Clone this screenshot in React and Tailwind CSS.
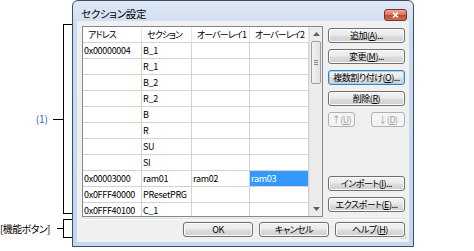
import React from 'react';

const rows = [
  ['0x00000004', 'B_1', '', ''],
  ['', 'R_1', '', ''],
  ['', 'B_2', '', ''],
  ['', 'R_2', '', ''],
  ['', 'B', '', ''],
  ['', 'R', '', ''],
  ['', 'SU', '', ''],
  ['', 'SI', '', ''],
  ['0x00003000', 'ram01', 'ram02', 'ram03'],
  ['0x0FFF40000', 'PResetPRG', '', ''],
  ['0x0FFF40100', 'C_1', '', ''],
];

const colW = ['w-[59px]', 'w-[50px]', 'w-[58px]', 'w-[59px]'];

const Btn = ({ children, className = 'w-[77px]', focus = false, disabled = false }) => {
  let look =
    'border-[#707070] bg-[linear-gradient(to_bottom,#f2f2f2,#ebebeb_48%,#dddddd_52%,#cfcfcf)] shadow-[inset_0_0_0_1px_#fbfbfb] text-black';
  if (focus)
    look =
      'border-[#3c7fb1] bg-[linear-gradient(to_bottom,#f2f2f2,#ebebeb_48%,#dddddd_52%,#cfcfcf)] shadow-[inset_0_0_0_1px_#9fd6f4] text-black';
  if (disabled) look = 'border-[#adb2b5] bg-[#f4f4f4] text-[#a0a0a0]';
  return (
    <div
      className={`${className} h-[15px] shrink-0 flex items-center justify-center rounded-[3px] border text-[9px] tracking-[-0.5px] leading-none whitespace-nowrap ${look}`}
    >
      {children}
    </div>
  );
};

const Tri = ({ down }) => (
  <svg width="7" height="4" viewBox="0 0 7 4">
    <path d={down ? 'M0 0h7L3.5 4z' : 'M0 4h7L3.5 0z'} fill="#606060" />
  </svg>
);

const Scrollbar = () => (
  <div className="w-[13px] h-full flex flex-col bg-[#ececec] border-l border-[#e2e2e2]">
    <div className="h-[14px] flex items-center justify-center">
      <Tri />
    </div>
    <div className="ml-[1px] w-[10px] h-[43px] rounded-[2px] border border-[#9a9fa5] bg-[linear-gradient(to_right,#f3f3f3,#e2e2e2)] flex flex-col items-center justify-center gap-[1px]">
      <div className="w-[4px] h-px bg-[#8a8a8a]" />
      <div className="w-[4px] h-px bg-[#8a8a8a]" />
      <div className="w-[4px] h-px bg-[#8a8a8a]" />
    </div>
    <div className="flex-1" />
    <div className="h-[14px] flex items-center justify-center">
      <Tri down />
    </div>
  </div>
);

const Table = () => (
  <div className="w-[241px] h-[191px] border border-[#828790] bg-white flex overflow-hidden">
    <div className="w-[226px] flex flex-col overflow-hidden">
      <div className="h-[16px] shrink-0 flex border-b border-[#d5d5d5] text-[9px] leading-none">
        {['アドレス', 'セクション', 'オーバーレイ1', 'オーバーレイ2'].map((h, i) => (
          <div
            key={h}
            className={`${colW[i]} h-full flex items-center border-r border-[#e3e3e3] pl-[5px] pr-[1px] tracking-[-0.9px] whitespace-nowrap overflow-hidden`}
          >
            {h}
          </div>
        ))}
      </div>
      {rows.map((r, ri) => (
        <div key={ri} className="h-[16px] shrink-0 flex border-b border-[#d3d3d3] text-[9px] leading-none">
          {r.map((c, ci) => {
            const sel = ri === 8 && ci === 3;
            return (
              <div
                key={ci}
                className={`${colW[ci]} h-full flex items-center border-r border-[#d3d3d3] px-[1px] whitespace-nowrap overflow-hidden tracking-[-0.3px] ${
                  sel ? 'bg-[#3399ff] text-white' : 'text-black'
                }`}
              >
                {c}
              </div>
            );
          })}
        </div>
      ))}
    </div>
    <Scrollbar />
  </div>
);

const Dialog = () => (
  <div className="w-[342px] h-[247px] shrink-0 border border-[#3d4e63] rounded-t-[6px] bg-[linear-gradient(to_bottom,#dfe9f5,#c9dbef_30px,#c4d7ee)] flex flex-col px-[4px] pb-[4px]">
    <div className="h-[20px] shrink-0 flex items-start justify-between">
      <div className="pt-[6px] pl-[4px] text-[10.5px] tracking-[-0.3px] leading-[14px] text-black">セクション設定</div>
      <div className="mt-[8px] mr-[2px] w-[23px] h-[12px] rounded-[3px] border border-[#7a3030] bg-[linear-gradient(to_bottom,#eea898,#d8705c_50%,#c24b36_55%,#d26b52)] flex items-center justify-center">
        <svg width="7" height="6" viewBox="0 0 7 6">
          <path d="M1 0.5L6 5.5M6 0.5L1 5.5" stroke="white" strokeWidth="1.6" />
        </svg>
      </div>
    </div>
    <div className="flex-1 bg-[#f0f0f0] flex flex-col pl-[5px] pr-[4px] pt-[5px] relative">
      <div className="h-[191px] flex gap-[5px]">
        <Table />
        <div className="w-[77px] flex flex-col pt-[2px] pb-[5px]">
          <div className="flex flex-col gap-[6px]">
            <Btn>
              追加(<u>A</u>)...
            </Btn>
            <Btn>
              変更(<u>M</u>)...
            </Btn>
            <Btn focus>
              複数割り付け(<u>O</u>)...
            </Btn>
            <Btn>
              削除(<u>R</u>)
            </Btn>
            <div className="flex justify-between">
              <Btn className="w-[27px]" disabled>
                ↑(<u>U</u>)
              </Btn>
              <Btn className="w-[34px]" disabled>
                ↓(<u>D</u>)
              </Btn>
            </div>
          </div>
          <div className="mt-auto flex flex-col gap-[6px]">
            <Btn>
              インポート(<u>I</u>)...
            </Btn>
            <Btn>
              エクスポート(<u>E</u>)...
            </Btn>
          </div>
        </div>
      </div>
      <div className="mt-[1px] h-[2px] border-t border-[#d5dfe5] border-b border-b-white" />
      <div className="mt-[2px] flex justify-end gap-[6px]">
        <Btn className="w-[70px]">OK</Btn>
        <Btn className="w-[70px]">キャンセル</Btn>
        <Btn className="w-[70px]">
          ヘルプ(<u>H</u>)
        </Btn>
      </div>
      <svg className="absolute right-[2px] bottom-[2px]" width="6" height="6" viewBox="0 0 6 6">
        <rect x="4" y="0" width="1" height="1" fill="#b8b8b8" />
        <rect x="2" y="2" width="1" height="1" fill="#b8b8b8" />
        <rect x="4" y="2" width="1" height="1" fill="#b8b8b8" />
        <rect x="0" y="4" width="1" height="1" fill="#b8b8b8" />
        <rect x="2" y="4" width="1" height="1" fill="#b8b8b8" />
        <rect x="4" y="4" width="1" height="1" fill="#b8b8b8" />
      </svg>
    </div>
  </div>
);

const Annotations = () => (
  <div className="w-[72px] shrink-0 flex flex-col pt-[24px] text-[10px] leading-none">
    <div className="h-[190px] flex items-center">
      <div className="flex-1 flex justify-end pr-[5px] text-[#2e64c8]">(1)</div>
      <div className="w-[10px] h-px bg-black" />
      <div className="w-[9px] h-full border-l border-y border-black" />
    </div>
    <div className="mt-[5px] h-[19px] flex items-center">
      <div className="flex-1 whitespace-nowrap tracking-[-0.6px] text-black">[機能ボタン]</div>
      <div className="w-[6px] h-px bg-black" />
      <div className="w-[9px] h-full border-l border-y border-black" />
    </div>
  </div>
);

export default function App() {
  return (
    <div className="w-[474px] h-[251px] bg-white flex font-['Noto_Sans_CJK_JP',sans-serif] [font-feature-settings:'palt']">
      <Annotations />
      <Dialog />
    </div>
  );
}
